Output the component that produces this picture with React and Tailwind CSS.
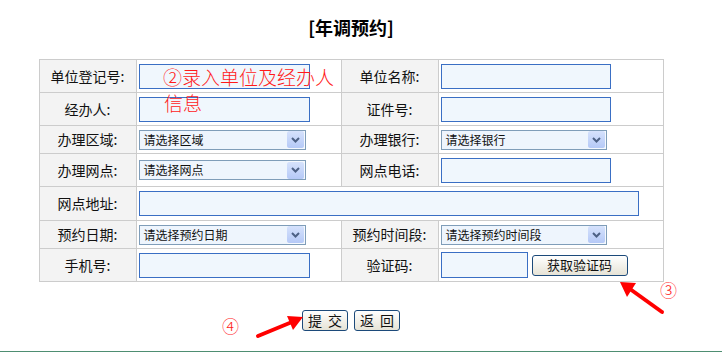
import React from 'react'

const Label = ({ children }) => (
  <div className="flex items-center justify-center bg-[#f3f3f3] text-[14px] text-[#111]">
    {children}
  </div>
)

const Cell = ({ children, className = '' }) => (
  <div className={`flex items-center bg-white pl-[2px] ${className}`}>{children}</div>
)

const TextInput = ({ w = 'w-[171px]', h = 'h-[25px]' }) => (
  <div className={`${w} ${h} border border-[#3a6fc4] bg-[#f0f7fd]`} />
)

const Select = ({ text, w = 'w-[167px]' }) => (
  <div className={`flex h-[20px] ${w} items-center border border-[#7f9db9] bg-[#f5f9fe] pr-px`}>
    <span className="flex-1 bg-[#eef5fd] pl-[4px] text-[12px] leading-[18px] text-[#111]">{text}</span>
    <span className="flex h-[17px] w-[17px] items-center justify-center rounded-[2px] bg-gradient-to-b from-[#d6e2fc] to-[#b5c9f7]">
      <svg width="9" height="6" viewBox="0 0 9 6">
        <path d="M1 1 L4.5 4.5 L8 1" fill="none" stroke="#4d6185" strokeWidth="2" />
      </svg>
    </span>
  </div>
)

const XpButton = ({ children, className = '' }) => (
  <button
    className={`flex items-center justify-center rounded-[3px] border border-[#1c4a7a] bg-gradient-to-b from-white to-[#e6e3d6] text-[#111] ${className}`}
  >
    {children}
  </button>
)

const App = () => {
  return (
    <div
      className="relative h-[352px] w-[722px] overflow-hidden bg-white"
      style={{ fontFamily: '"Noto Sans CJK SC", "Liberation Sans", sans-serif' }}
    >
      <div className="flex w-[702px] flex-col items-center pt-[14px]">
        <h1 className="text-[18px] font-bold leading-[26px] text-black">[年调预约]</h1>

        <div className="mt-[19px] grid grid-cols-[96px_204px_96px_224px] grid-rows-[32px_32px_27px_32px_33px_27px_32px] gap-px bg-[#cccccc] p-px">
          <Label>单位登记号:</Label>
          <Cell><TextInput /></Cell>
          <Label>单位名称:</Label>
          <Cell><TextInput w="w-[170px]" /></Cell>

          <Label>经办人:</Label>
          <Cell><TextInput /></Cell>
          <Label>证件号:</Label>
          <Cell><TextInput w="w-[170px]" /></Cell>

          <Label>办理区域:</Label>
          <Cell><Select text="请选择区域" /></Cell>
          <Label>办理银行:</Label>
          <Cell><Select text="请选择银行" w="w-[166px]" /></Cell>

          <Label>办理网点:</Label>
          <Cell><Select text="请选择网点" /></Cell>
          <Label>网点电话:</Label>
          <Cell><TextInput w="w-[170px]" /></Cell>

          <Label>网点地址:</Label>
          <Cell className="col-span-3"><TextInput w="w-[500px]" /></Cell>

          <Label>预约日期:</Label>
          <Cell><Select text="请选择预约日期" /></Cell>
          <Label>预约时间段:</Label>
          <Cell><Select text="请选择预约时间段" w="w-[166px]" /></Cell>

          <Label>手机号:</Label>
          <Cell><TextInput /></Cell>
          <Label>验证码:</Label>
          <Cell className="gap-[4px]">
            <TextInput w="w-[87px]" h="h-[26px]" />
            <XpButton className="h-[21px] w-[96px] text-[13px]">获取验证码</XpButton>
          </Cell>
        </div>

        <div className="mt-[28px] flex gap-[6px]">
          <XpButton className="h-[21px] w-[46px] gap-[6px] text-[14px]">
            <span>提</span>
            <span>交</span>
          </XpButton>
          <XpButton className="h-[21px] w-[46px] gap-[6px] text-[14px]">
            <span>返</span>
            <span>回</span>
          </XpButton>
        </div>
      </div>

      {/* annotations */}
      <div className="absolute left-[163px] top-[64px] text-[19px] font-light leading-[26px] text-[#ff1a1a]">
        <div>②录入单位及经办人</div>
        <div className="pl-px">信息</div>
      </div>
      <div className="absolute left-[660px] top-[280px] text-[17px] font-light leading-[20px] text-[#ff1a1a]">③</div>
      <div className="absolute left-[222px] top-[316px] text-[17px] font-light leading-[20px] text-[#ff1a1a]">④</div>

      <svg className="absolute left-0 top-0" width="722" height="352">
        <line x1="662" y1="312" x2="630" y2="289" stroke="#ff0000" strokeWidth="4" strokeLinecap="round" />
        <polygon points="620,282 636,283 627,297" fill="#ff0000" />
        <line x1="258" y1="336" x2="292" y2="322" stroke="#ff0000" strokeWidth="4" strokeLinecap="round" />
        <polygon points="303,317 287,316 293,330" fill="#ff0000" />
      </svg>

      <div className="absolute bottom-0 left-0 h-px w-full bg-[#4e8e72]" />
    </div>
  )
}

export default App
